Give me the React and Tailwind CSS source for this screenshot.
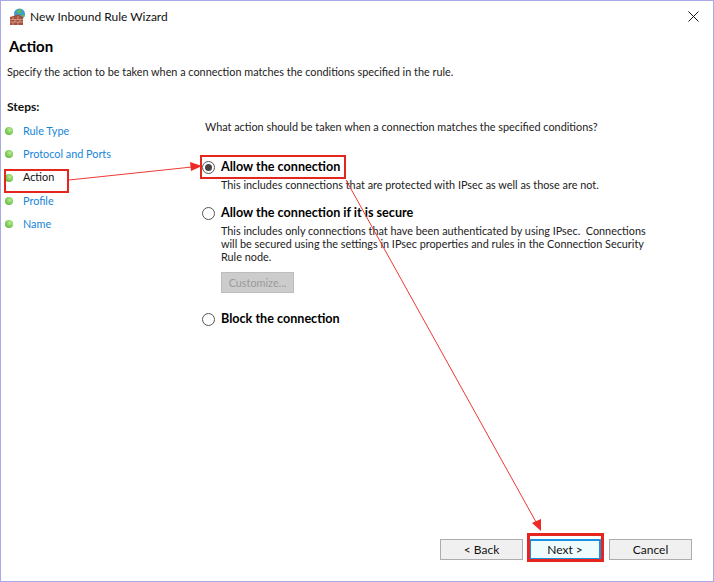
import React from "react";

const steps = [
  { label: "Rule Type" },
  { label: "Protocol and Ports" },
  { label: "Action", active: true },
  { label: "Profile" },
  { label: "Name" },
];

const Radio = ({ checked }) => (
  <span className="w-[13px] h-[13px] rounded-full border border-[#555] bg-white flex items-center justify-center shrink-0">
    {checked && <span className="w-[7px] h-[7px] rounded-full bg-[#444]" />}
  </span>
);

const Option = ({ checked, title, children }) => (
  <div>
    <div className="flex items-center gap-[6px] h-[18px]">
      <Radio checked={checked} />
      <span className="font-bold text-[12.6px] text-black">{title}</span>
    </div>
    {children && <div className="ml-[19px] mt-[2px] text-[#222] leading-[13px]">{children}</div>}
  </div>
);

const WizardButton = ({ children, primary, className = "" }) => (
  <button
    className={
      (primary
        ? "w-[72px] h-[21px] border-2 border-[#1a90e0] bg-[#eefcfd] text-[#111] text-[12px] "
        : "w-[83px] h-[21px] border border-[#adadad] bg-[#f0f0f0] text-[#111] text-[12px] ") + className
    }
  >
    {children}
  </button>
);

const WallIcon = () => (
  <svg width="18" height="18" viewBox="0 0 18 18">
    <circle cx="10.500" cy="6" r="5.500" fill="#3b9bd8" />
    <path d="M8 2c2-1 4-1 5 1l-2 3-3-1zM12 7l3-1 1 2-3 2z" fill="#5cb85c" />
    <path d="M1 9l8-2.500 5 2.500v8H1z" fill="#a5503c" />
    <path d="M1 11.500h13M1 14h13M4 9v2.500M9 8v3.500M6 11.500V14M11 11.500V14M4 14v3M9 14v3" stroke="#d9a48f" strokeWidth="0.8" fill="none" />
  </svg>
);

// red arrows drawn over the dialog
const Annotations = () => (
  <svg className="absolute inset-0 pointer-events-none" width="712" height="580" viewBox="1 1 712 580">
    <line x1="69" y1="180" x2="192" y2="167" stroke="#ee3a33" strokeWidth="1" />
    <polygon points="202,166 190,162 191,171" fill="#ee2a24" />
    <line x1="346" y1="180" x2="536" y2="522" stroke="#ee3a33" strokeWidth="1" />
    <polygon points="541,531 532,523 541,519" fill="#ee2a24" />
  </svg>
);

const App = () => {
  return (
    <div className="relative w-[714px] h-[582px] bg-white border border-[#a9a9e8] flex flex-col text-[10.85px] text-[#222] font-['Lato',sans-serif] overflow-hidden">
      <div className="flex items-center h-[30px] pl-[8px] pr-[14px] pt-[1px] shrink-0">
        <WallIcon />
        <span className="ml-[3px] text-[12px] text-[#111]">New Inbound Rule Wizard</span>
        <svg className="ml-auto" width="11" height="11" viewBox="0 0 11 11">
          <path d="M0.500 0.500l10 10M10.500 0.500l-10 10" stroke="#111" strokeWidth="1" fill="none" />
        </svg>
      </div>

      <div className="pl-[8px] mt-[5px] font-bold text-[15px] leading-[20px] text-black">Action</div>
      <div className="pl-[6px] mt-[8px] leading-[16px]">Specify the action to be taken when a connection matches the conditions specified in the rule.</div>

      <div className="flex flex-1 mt-[19px]">
        <div className="w-[204px] shrink-0 pl-[6px]">
          <div className="font-bold text-[12px] leading-[16px] text-[#111]">Steps:</div>
          <div className="mt-[8px] -ml-[2px] flex flex-col gap-[7.3px]">
            {steps.map((s) => (
              <div key={s.label} className="flex items-center h-[16px]">
                <span className="w-[8px] h-[8px] rounded-full bg-[radial-gradient(circle_at_60%_35%,#b6ee8e,#4aa82c)] shrink-0" />
                <span className={"ml-[10px] " + (s.active ? "text-[#111]" : "text-[#1585d8]")}>{s.label}</span>
              </div>
            ))}
          </div>
        </div>

        <div className="flex-1 pt-[20px]">
          <div className="leading-[16px]">What action should be taken when a connection matches the specified conditions?</div>
          <div className="mt-[23px] -ml-[3px] flex flex-col">
            <Option checked title="Allow the connection">
              This includes connections that are protected with IPsec as well as those are not.
            </Option>
            <div className="mt-[13px]">
              <Option title="Allow the connection if it is secure">
                <div className="w-[432px]">
                  This includes only connections that have been authenticated by using IPsec.&nbsp; Connections will be secured using the settings in IPsec properties and rules in the Connection Security Rule node.
                </div>
                <button className="mt-[9px] w-[73px] h-[21px] bg-[#cccccc] border border-[#bdbdbd] text-[#9a9a9a] text-[10.85px]">Customize...</button>
              </Option>
            </div>
            <div className="mt-[17px]">
              <Option title="Block the connection" />
            </div>
          </div>
        </div>
      </div>

      <div className="flex justify-end gap-[6px] pr-[21px] pb-[21px] shrink-0">
        <WizardButton>&lt; Back</WizardButton>
        <WizardButton primary>Next &gt;</WizardButton>
        <WizardButton className="ml-[2px]">Cancel</WizardButton>
      </div>

      <Annotations />
      <div className="absolute left-[3px] top-[168px] w-[65px] h-[24px] border-2 border-[#e5261f]" />
      <div className="absolute left-[199px] top-[154px] w-[146px] h-[24px] border-2 border-[#e5261f]" />
      <div className="absolute left-[526px] top-[532px] w-[77px] h-[29px] border-[3px] border-[#e5261f]" />
    </div>
  );
};

export default App;
